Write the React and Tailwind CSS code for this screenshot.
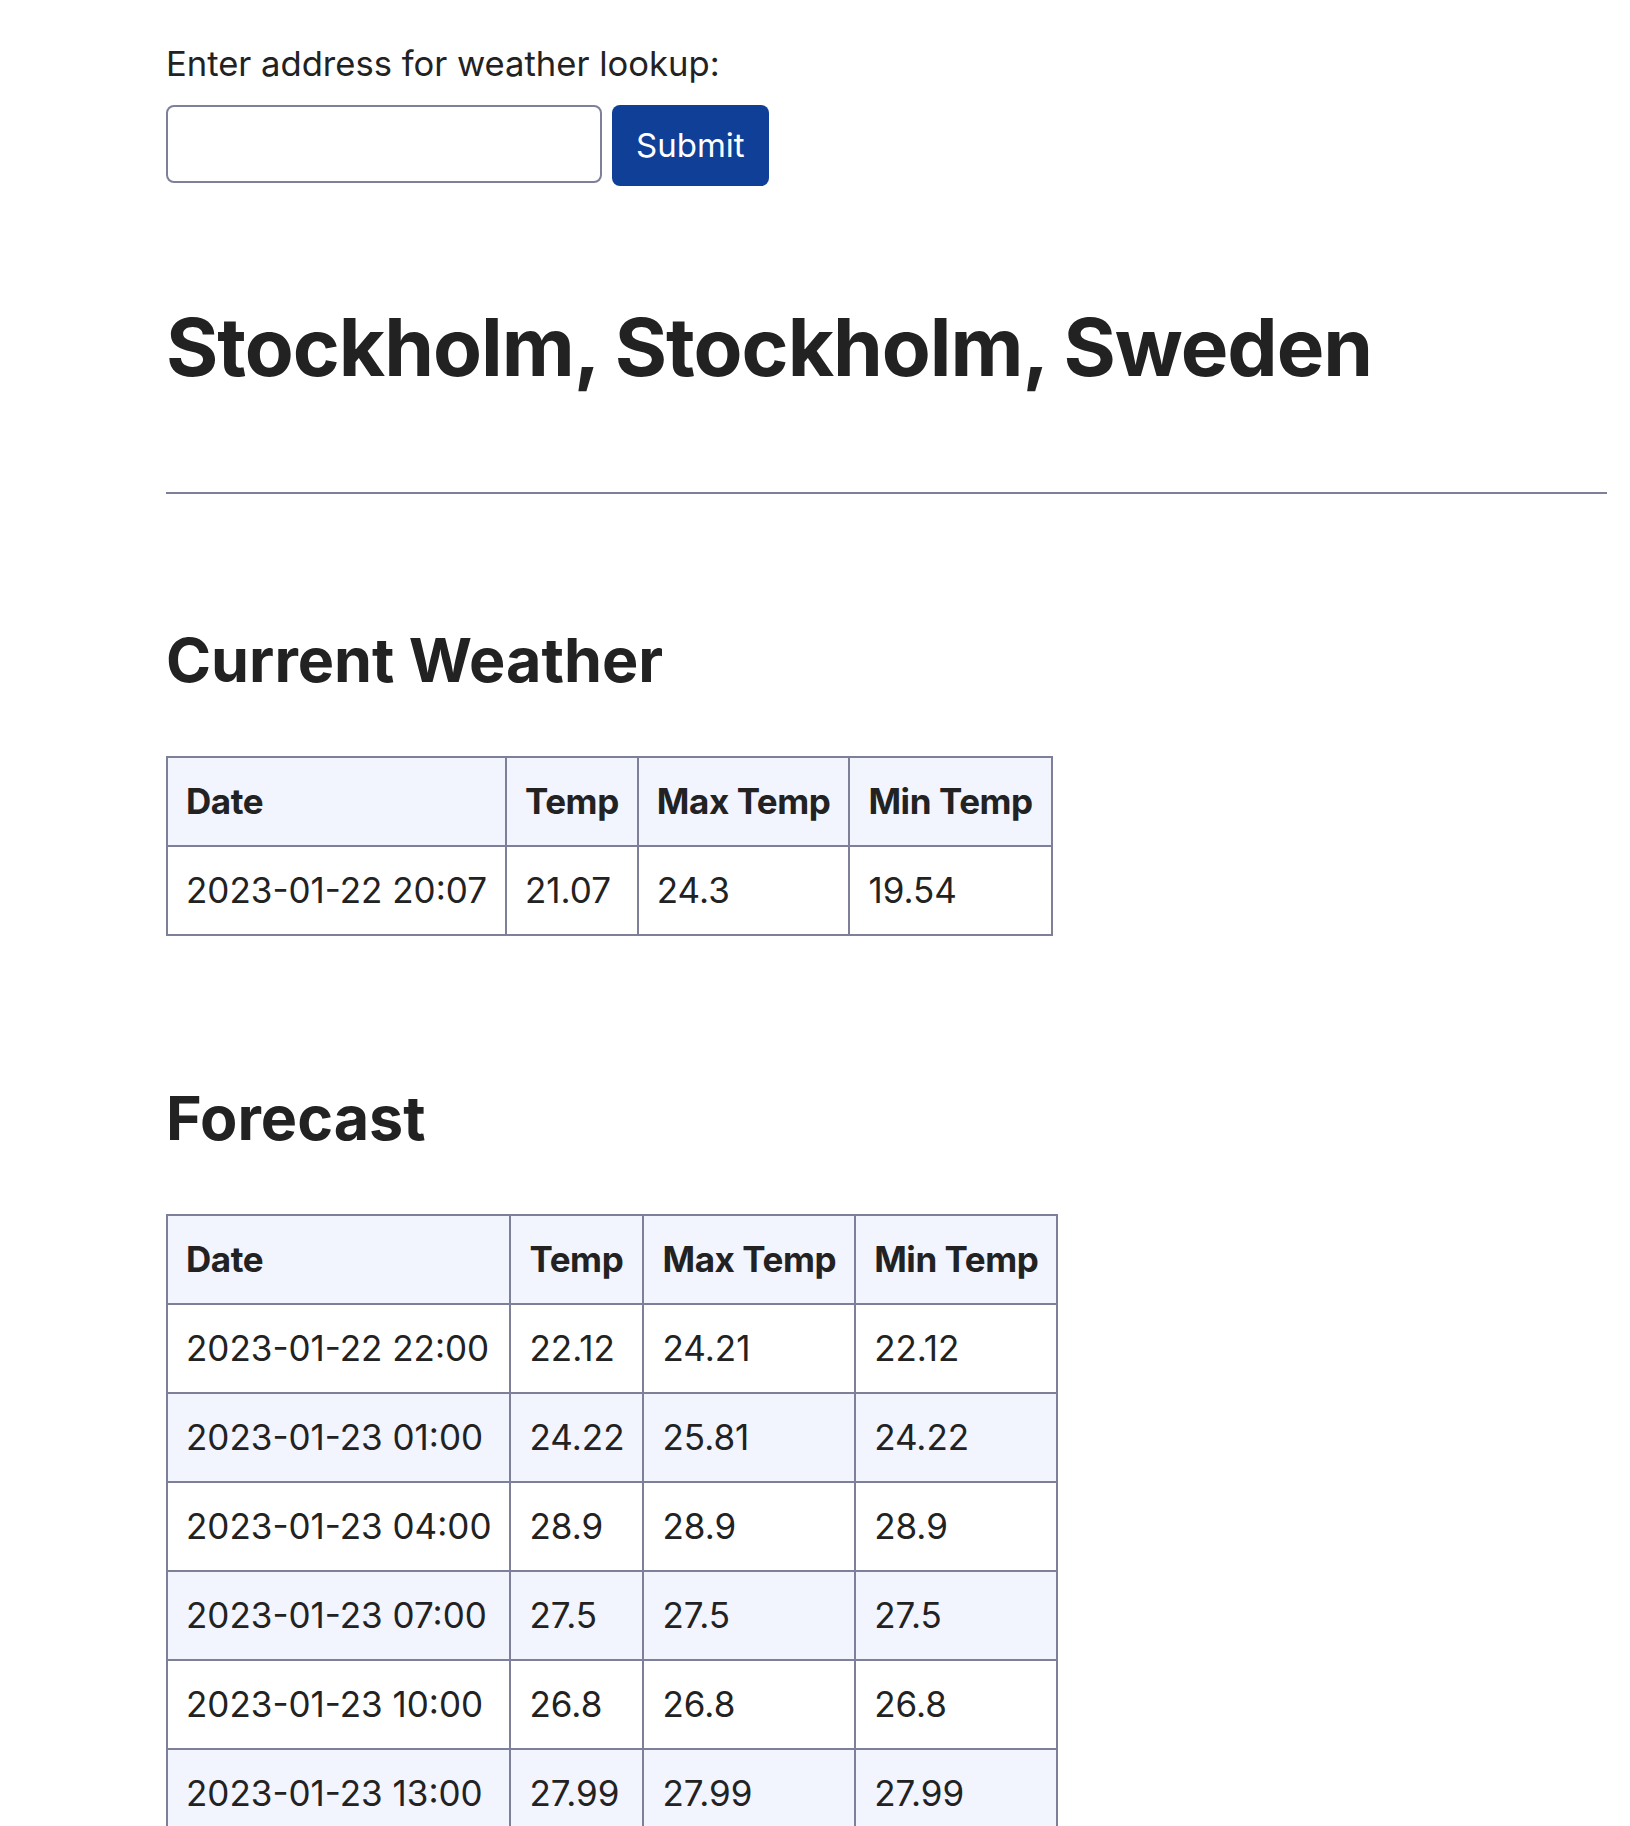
import React from 'react';

const current = [{ date: '2023-01-22 20:07', temp: '21.07', max: '24.3', min: '19.54' }];

const forecast = [
    { date: '2023-01-22 22:00', temp: '22.12', max: '24.21', min: '22.12' },
    { date: '2023-01-23 01:00', temp: '24.22', max: '25.81', min: '24.22' },
    { date: '2023-01-23 04:00', temp: '28.9', max: '28.9', min: '28.9' },
    { date: '2023-01-23 07:00', temp: '27.5', max: '27.5', min: '27.5' },
    { date: '2023-01-23 10:00', temp: '26.8', max: '26.8', min: '26.8' },
    { date: '2023-01-23 13:00', temp: '27.99', max: '27.99', min: '27.99' },
];

const WeatherTable = ({ rows, className = '' }) => (
    <table className={`border-collapse border-2 border-[#7d8098] ${className}`}>
        <thead>
            <tr className="bg-[#f2f4fe]">
                {['Date', 'Temp', 'Max Temp', 'Min Temp'].map(h => (
                    <th key={h} className="border-2 border-[#7d8098] px-[18px] py-[17px] text-left font-bold leading-[53px] tracking-[-0.012em]">
                        {h}
                    </th>
                ))}
            </tr>
        </thead>
        <tbody>
            {rows.map((r, i) => (
                <tr key={r.date} className={i % 2 === 1 ? 'bg-[#f2f4fe]' : 'bg-white'}>
                    <td className="border-2 border-[#7d8098] px-[18px] py-[17px] leading-[53px]">{r.date}</td>
                    <td className="border-2 border-[#7d8098] px-[18px] py-[17px] leading-[53px]">{r.temp}</td>
                    <td className="border-2 border-[#7d8098] px-[18px] py-[17px] leading-[53px]">{r.max}</td>
                    <td className="border-2 border-[#7d8098] px-[18px] py-[17px] leading-[53px]">{r.min}</td>
                </tr>
            ))}
        </tbody>
    </table>
);

export default function App() {
    return (
        <div className="min-h-[1826px] bg-white pl-[166px] pr-[23px] pt-[42px] font-['Inter',_'Liberation_Sans',_sans-serif] text-[35px] text-[#222]">
            {/* Lookup form */}
            <label htmlFor="address" className="block text-[34.6px] leading-[42px]">Enter address for weather lookup:</label>
            <form className="mt-[21px] flex items-start gap-[10px]" onSubmit={e => e.preventDefault()}>
                <input
                    id="address"
                    type="text"
                    className="h-[78px] w-[436px] rounded-[8px] border-2 border-[#7d8098] bg-white px-[16px] outline-none"
                />
                <button type="submit" className="h-[81px] rounded-[8px] bg-[#103f98] px-[24px] text-[33px] text-white">
                    Submit
                </button>
            </form>

            <h1 className="mt-[111px] text-[80px] font-bold leading-[100px] tracking-[-0.013em]">Stockholm, Stockholm, Sweden</h1>
            <hr className="mt-[95px] border-t-2 border-[#7d8098]" />

            <h2 className="mt-[124px] text-[61px] font-bold leading-[84px]">Current Weather</h2>
            <WeatherTable rows={current} className="mt-[54px]" />

            <h2 className="mt-[140px] text-[61px] font-bold leading-[84px]">Forecast</h2>
            <WeatherTable rows={forecast} className="mt-[54px]" />
        </div>
    );
}
